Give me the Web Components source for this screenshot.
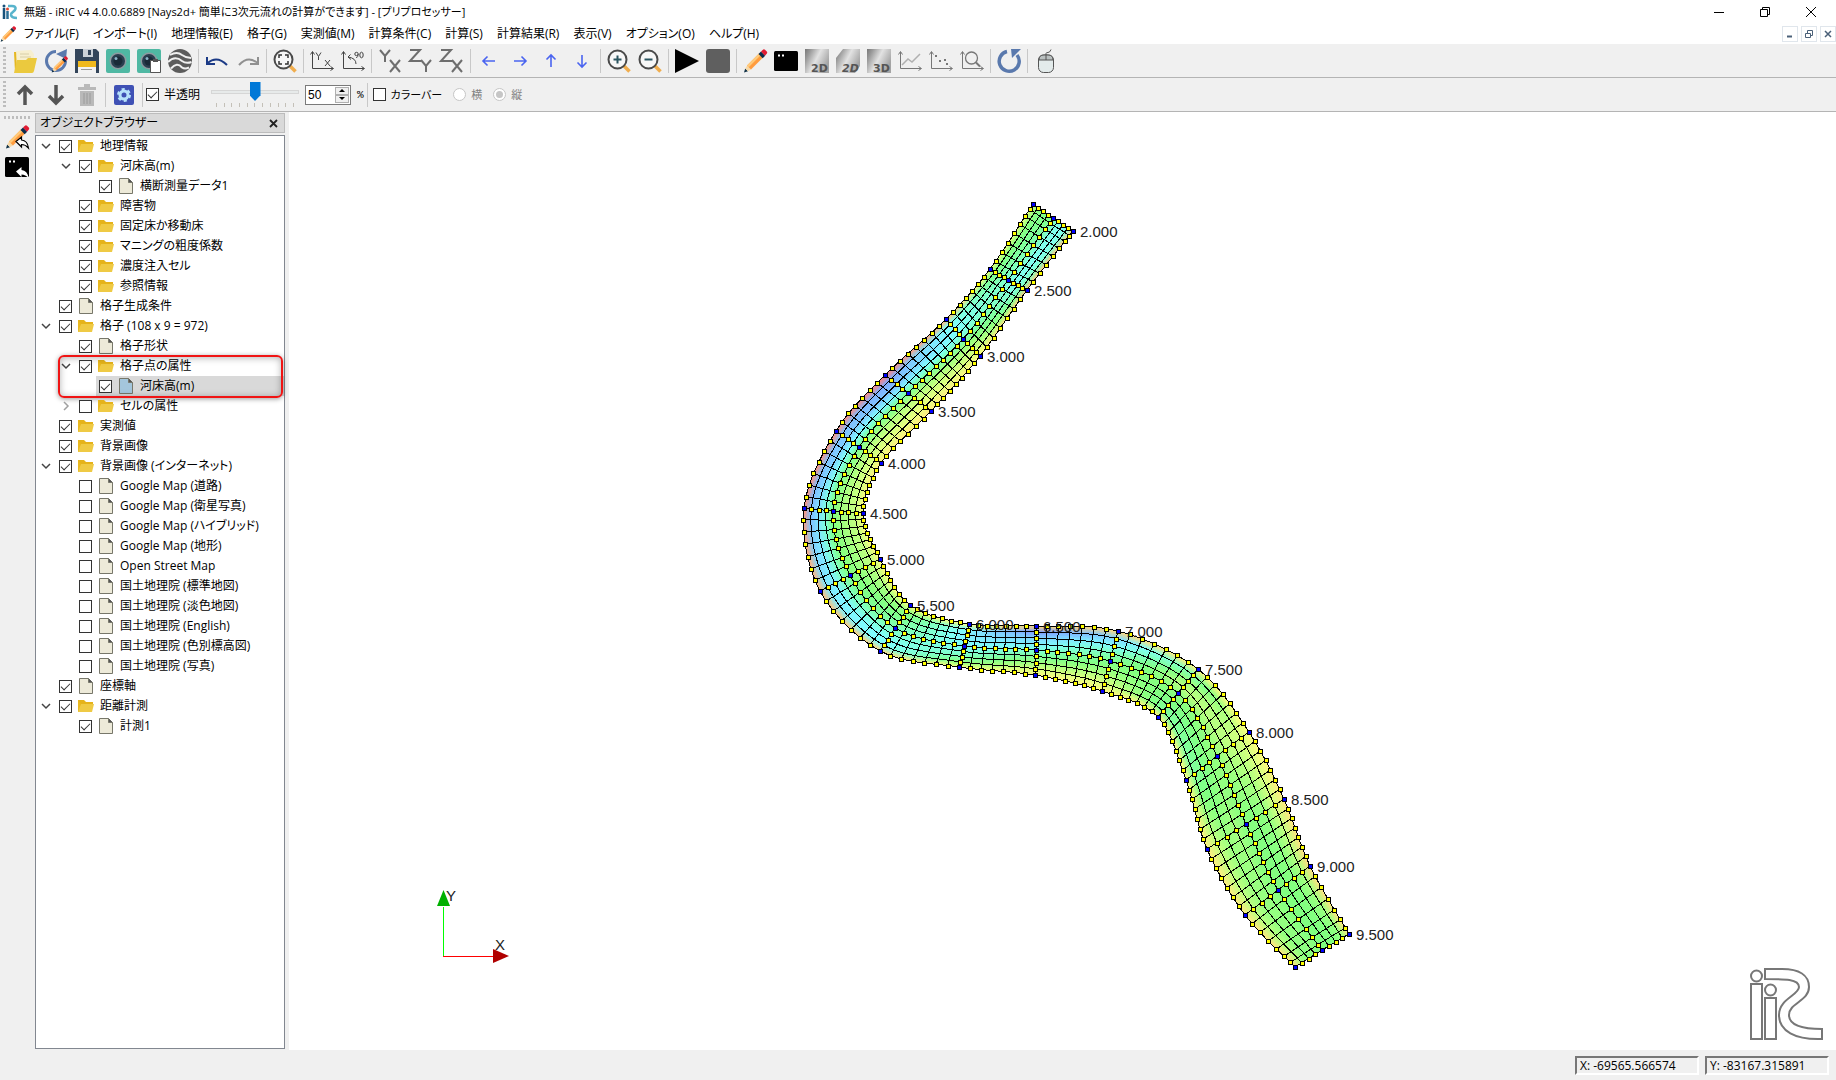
<!DOCTYPE html>
<html lang="ja">
<head>
<meta charset="utf-8">
<title>iRIC</title>
<style>
    html, body { height: 100%; margin: 0; }
    body {
        background: #f0f0f0;
        color: #000;
        font: 12px/20px "Open Sans", "Noto Sans CJK JP", sans-serif;
        font-feature-settings: "palt";
        overflow: hidden;
    }
</style>
</head>
<body>
<app-window>
    <title-bar slot="title" text="無題 - iRIC v4 4.0.0.6889 [Nays2d+ 簡単に3次元流れの計算ができます] - [プリプロセッサー]"></title-bar>
    <menu-bar slot="menu" items="ファイル(F),インポート(I),地理情報(E),格子(G),実測値(M),計算条件(C),計算(S),計算結果(R),表示(V),オプション(O),ヘルプ(H)"></menu-bar>

    <tool-bar slot="tools">
        <tool-button icon="open"></tool-button>
        <tool-button icon="reload"></tool-button>
        <tool-button icon="save"></tool-button>
        <tool-button icon="camera"></tool-button>
        <tool-button icon="cameraCopy"></tool-button>
        <tool-button icon="earth"></tool-button>
        <tool-separator></tool-separator>
        <tool-button icon="undo"></tool-button>
        <tool-button icon="redo"></tool-button>
        <tool-separator></tool-separator>
        <tool-button icon="fit"></tool-button>
        <tool-separator></tool-separator>
        <tool-button icon="axesXY"></tool-button>
        <tool-button icon="rotate90"></tool-button>
        <tool-separator></tool-separator>
        <tool-button icon="planeXY"></tool-button>
        <tool-button icon="planeYZ"></tool-button>
        <tool-button icon="planeXZ"></tool-button>
        <tool-separator></tool-separator>
        <tool-button icon="left"></tool-button>
        <tool-button icon="right"></tool-button>
        <tool-button icon="up"></tool-button>
        <tool-button icon="down"></tool-button>
        <tool-separator></tool-separator>
        <tool-button icon="zoomIn"></tool-button>
        <tool-button icon="zoomOut"></tool-button>
        <tool-separator></tool-separator>
        <tool-button icon="play"></tool-button>
        <tool-button icon="stop"></tool-button>
        <tool-separator></tool-separator>
        <tool-button icon="pencil"></tool-button>
        <tool-button icon="console"></tool-button>
        <tool-button icon="view2d"></tool-button>
        <tool-button icon="view2dBird"></tool-button>
        <tool-button icon="view3d"></tool-button>
        <tool-button icon="chart"></tool-button>
        <tool-button icon="scatter"></tool-button>
        <tool-button icon="chartZoom"></tool-button>
        <tool-separator></tool-separator>
        <tool-button icon="refresh"></tool-button>
        <tool-separator></tool-separator>
        <tool-button icon="mouse"></tool-button>
    </tool-bar>

    <tool-bar slot="tools">
        <tool-button icon="moveUp"></tool-button>
        <tool-button icon="moveDown"></tool-button>
        <tool-button icon="trash"></tool-button>
        <tool-separator></tool-separator>
        <tool-button icon="gear"></tool-button>
        <tool-separator></tool-separator>
        <opacity-control></opacity-control>
        <tool-separator></tool-separator>
        <colorbar-control></colorbar-control>
    </tool-bar>

    <side-strip slot="side">
        <tool-button icon="pencilBack"></tool-button>
        <tool-button icon="consoleBack"></tool-button>
    </side-strip>

    <dock-panel slot="dock" heading="オブジェクトブラウザー">
        <tree-item label="地理情報" icon="folder" checked expanded>
            <tree-item label="河床高(m)" icon="folder" checked expanded>
                <tree-item label="横断測量データ1" icon="file" checked></tree-item>
            </tree-item>
            <tree-item label="障害物" icon="folder" checked></tree-item>
            <tree-item label="固定床か移動床" icon="folder" checked></tree-item>
            <tree-item label="マニングの粗度係数" icon="folder" checked></tree-item>
            <tree-item label="濃度注入セル" icon="folder" checked></tree-item>
            <tree-item label="参照情報" icon="folder" checked></tree-item>
        </tree-item>
        <tree-item label="格子生成条件" icon="file" checked></tree-item>
        <tree-item label="格子 (108 x 9 = 972)" icon="folder" checked expanded>
            <tree-item label="格子形状" icon="file" checked></tree-item>
            <tree-item label="格子点の属性" icon="folder" checked expanded marked>
                <tree-item label="河床高(m)" icon="fileBlue" checked selected></tree-item>
            </tree-item>
            <tree-item label="セルの属性" icon="folder" collapsed></tree-item>
        </tree-item>
        <tree-item label="実測値" icon="folder" checked></tree-item>
        <tree-item label="背景画像" icon="folder" checked></tree-item>
        <tree-item label="背景画像 (インターネット)" icon="folder" checked expanded>
            <tree-item label="Google Map (道路)" icon="file"></tree-item>
            <tree-item label="Google Map (衛星写真)" icon="file"></tree-item>
            <tree-item label="Google Map (ハイブリッド)" icon="file"></tree-item>
            <tree-item label="Google Map (地形)" icon="file"></tree-item>
            <tree-item label="Open Street Map" icon="file"></tree-item>
            <tree-item label="国土地理院 (標準地図)" icon="file"></tree-item>
            <tree-item label="国土地理院 (淡色地図)" icon="file"></tree-item>
            <tree-item label="国土地理院 (English)" icon="file"></tree-item>
            <tree-item label="国土地理院 (色別標高図)" icon="file"></tree-item>
            <tree-item label="国土地理院 (写真)" icon="file"></tree-item>
        </tree-item>
        <tree-item label="座標軸" icon="file" checked></tree-item>
        <tree-item label="距離計測" icon="folder" checked expanded>
            <tree-item label="計測1" icon="file" checked></tree-item>
        </tree-item>
    </dock-panel>

    <grid-view slot="view"></grid-view>

    <status-bar slot="status">
        <status-field>X: -69565.566574</status-field>
        <status-field>Y: -83167.315891</status-field>
    </status-bar>
</app-window>

<script>
// ---- icons ----
const svg = (body, size = 24) => `<svg width="${size}" height="${size}" viewBox="0 0 ${size} ${size}" aria-hidden="true">${body}</svg>`;

const PENCIL = `
    <path d="M1 23.5l1.200-4 2.800 2.800z" fill="#123247"/>
    <path d="M2.200 19.500l2.300-3.500 4 4-3.500 2.300z" fill="#f7d9a8"/>
    <path d="M4 16.500L16 4.500l4 4L8 20.500z" fill="#ff9c3f"/>
    <path d="M4 16.500L16 4.500l1.700 1.700L5.700 18.200z" fill="#ffca7a"/>
    <path d="M15.500 5l2.500-2.500 4.200 4.200-2.500 2.500z" fill="#0d2c4a"/>
    <path d="M18 2.500L20.200.500q1-.6 1.800.2l2 2q.5.900-.1 1.700L22 6.700z" fill="#e01b32"/>`;
const CAMERA = `
    <rect width="24" height="24" rx="2" fill="#4fb8a3"/>
    <circle cx="12" cy="12" r="8.500" fill="#8d9aa0"/>
    <circle cx="12" cy="12" r="7" fill="#2a3e4f"/>
    <circle cx="12" cy="12" r="4.500" fill="#1a2a38"/>
    <circle cx="10" cy="9.500" r="1.500" fill="#8db4c8"/>`;
const LENS = `
    <path d="M17 17l5.500 5.500" stroke="#f0ad4e" stroke-width="3.500"/>
    <circle cx="10.500" cy="10.500" r="9" fill="#f7f7f7" stroke="#4a4a4a" stroke-width="2"/>`;
const AXES = `<path d="M2.500 3v16.500H23M.500 5.500l2-3 2 3M20.500 17.500l3 2-3 2" fill="none"/>`;
const CONSOLE = `<rect y="2" width="24" height="20" rx="1.500"/><path d="M4 6.500h2M8 6.500h2" stroke="#fff" stroke-width="2"/>`;
const BACK = `<path d="M11 16.500l5.500-4.500v3q6 .5 7 8-3-3.500-7-3.500v2.500z" `;
const letters = (a, b) => `<g fill="none" stroke="#6e6e6e" stroke-width="2">${a}${b}</g>`;
const metal = `<defs><linearGradient id="m" x2="1" y2=".5"><stop stop-color="#777"/><stop offset=".2" stop-color="#999"/><stop offset=".55" stop-color="#e2e2e2"/><stop offset="1" stop-color="#a4a4a4"/></linearGradient></defs>`;
const arrow = angle => `<path transform="rotate(${angle} 12 12)" d="M6 12h12M10.500 7.500L6 12l4.500 4.500" fill="none" stroke="#4a64f0" stroke-width="1.600"/>`;
const PAGE = fill => `<path d="M1.500.500h9l4 4v11h-13z" fill="${fill}" stroke="#77776a"/><path d="M10.500.500v4h4" fill="#555" stroke="#77776a"/>`;

const ICONS = {
    logo: svg(`<circle cx="2" cy="2" r="1.500" fill="#17517a"/><path d="M2 4v11" stroke="#17517a" stroke-width="2.500"/>
        <circle cx="5.500" cy="5" r="1.500" fill="#e04830"/><path d="M5.500 7v8" stroke="#2d6f96" stroke-width="2.500"/>
        <path d="M6 2h4q4 0 3.500 2.800-.3 1.700-2.500 3T9 11q.5 3 6 3" fill="none" stroke="#58b4cc" stroke-width="2.600"/>`, 16),
    pencilSmall: `<svg width="16" height="16" viewBox="0 0 24 24">${PENCIL}</svg>`,
    open: svg(`<path d="M1 3h7l2 2v18H2z" fill="#e5b721"/><path d="M3 2l15-1 3 4-1 15H4z" fill="#f7efcf"/><path d="M7 5h9M7 8h11" stroke="#d8cfa8"/>
        <path d="M4 11h9l2-2h9l-3 13q-.5 2-2 2H1z" fill="#ebc93e"/>`),
    reload: svg(`<path d="M12 2.500A9.500 9.500 0 1 0 21.500 12" fill="none" stroke="#5a79ad" stroke-width="3"/><path d="M12 5l11-5-1 10z" fill="#5a79ad"/>
        <g transform="translate(7 7) scale(.7)">${PENCIL}</g>`),
    save: svg(`<path d="M0 0h21l3 3v21H0z" fill="#33455a"/><path d="M8 0h10v8H8z" fill="#ccd2d8"/><path d="M13 1h3v5h-3z" fill="#33455a"/>
        <path d="M3 12h18v12H3z" fill="#f2f2f2"/><path d="M3 12h18v6H3z" fill="#f0b91d"/><path d="M6 20.500h11" stroke="#999"/>`),
    camera: svg(CAMERA),
    cameraCopy: svg(CAMERA + `<path d="M13.500 11.500h10v12h-10z" fill="#fff" stroke="#555"/><path d="M16 10h5v3h-5z" fill="#555"/>`),
    earth: svg(`<circle cx="12" cy="12" r="12" fill="#5c5c5c"/>
        <path d="M2 6q7-4 12 0 4 3 9 3M0 13q7-7 14-1 4 3 9.500 1M3 19.500q6-7 11-1 3 2 7 0" fill="none" stroke="#f0f0f0" stroke-width="2"/>`),
    undo: svg(`<path d="M2.500 14Q12 6 22 16" fill="none" stroke="#1b3a86" stroke-width="2"/><path d="M2 8v7h8" fill="none" stroke="#1b3a86" stroke-width="2"/>`),
    redo: svg(`<path d="M21.500 14Q12 6 3 16" fill="none" stroke="#909090" stroke-width="2"/><path d="M22 8v7h-8" fill="none" stroke="#909090" stroke-width="2"/>`),
    fit: svg(LENS + `<path d="M6 9V6h3M12 6h3v3M15 12v3h-3M9 15H6v-3" fill="none" stroke="#333" stroke-width="1.500"/>`),
    axesXY: svg(`<g stroke="#444">${AXES}<path d="M6 3.500l2.500 4 2.500-4M8.500 7.500V11M15 11l5 6M20 11l-5 6" fill="none"/></g>`),
    rotate90: svg(`<g stroke="#444">${AXES}<path d="M15 15q0-6-8-7M9.500 5.500L7 8l3 2.500" fill="none"/>
        <circle cx="15.500" cy="5" r="1.700" fill="none"/><path d="M17.200 5q0 3-2 4" fill="none"/><ellipse cx="20.500" cy="6" rx="1.700" ry="2.800" fill="none"/></g>`),
    planeXY: svg(letters(`<path d="M2 1l5 6 5-6M7 7v6"/>`, `<path d="M12 11l10 12M22 11L12 23"/>`)),
    planeYZ: svg(letters(`<path d="M1 1h10L1 12h11"/>`, `<path d="M12 11l5 6 5-6M17 17v6"/>`)),
    planeXZ: svg(letters(`<path d="M1 1h10L1 12h11"/>`, `<path d="M12 11l10 12M22 11L12 23"/>`)),
    left: svg(arrow(0)),
    right: svg(arrow(180)),
    up: svg(arrow(90)),
    down: svg(arrow(270)),
    zoomIn: svg(LENS + `<path d="M6.500 10.500h8M10.500 6.500v8" stroke="#2b5560" stroke-width="2"/>`),
    zoomOut: svg(LENS + `<path d="M6.500 10.500h8" stroke="#2b5560" stroke-width="2"/>`),
    play: svg(`<path d="M0 0l24 12L0 24z"/>`),
    stop: svg(`<rect width="24" height="24" rx="3" fill="#5f5f5f"/>`),
    pencil: svg(PENCIL),
    console: svg(CONSOLE),
    view2d: svg(`${metal}<path d="M0 0h24v24H0z" fill="url(#m)"/><text x="6" y="23" font-family="DejaVu Sans" font-weight="bold" font-size="11" fill="#555">2D</text>`),
    view2dBird: svg(`${metal}<path d="M7 0h17v17l-5 7H0V9z" fill="url(#m)"/><text x="6" y="23" font-family="DejaVu Sans" font-weight="bold" font-style="italic" font-size="11" fill="#555">2D</text>`),
    view3d: svg(`${metal}<path d="M0 0h24v24H0z" fill="url(#m)"/><text x="6" y="23" font-family="DejaVu Sans" font-weight="bold" font-size="11" fill="#555">3D</text>`),
    chart: svg(`<g stroke="#777">${AXES}<path d="M4 16l6-6 4 3 8-8" fill="none" stroke="#b0b0b0" stroke-width="1.500"/></g>`),
    scatter: svg(`<g stroke="#777">${AXES}</g><path d="M6 7h2M10 12h2M15 11h2M17 15h2" stroke="#777" stroke-width="2"/>`),
    chartZoom: svg(`<g stroke="#777">${AXES}<circle cx="11.500" cy="9" r="6" fill="none" stroke-width="1.300"/><path d="M16 13.500l4 4" stroke-width="2"/></g>`),
    refresh: svg(`<path d="M10 2.500A10 10 0 1 0 20 6" fill="none" stroke="#5a79ad" stroke-width="3.500"/><path d="M14 0h10l-9 9z" fill="#5a79ad"/>`),
    mouse: svg(`<rect x="4.500" y="6" width="15" height="17.500" rx="5" fill="#e3ebeb" stroke="#555"/><path d="M5 11q0-5 5-5h4q5 0 5 5z" fill="#b9bfbf" stroke="#555"/>
        <path d="M12 11V4.500q0-1 2-1 2 0 3-3" fill="none" stroke="#555"/>`),
    moveUp: svg(`<path d="M12 22V4M5 11l7-7 7 7" fill="none" stroke="#555" stroke-width="3.500"/>`),
    moveDown: svg(`<path d="M12 2v18M5 13l7 7 7-7" fill="none" stroke="#555" stroke-width="3.500"/>`),
    trash: svg(`<path d="M3 4h18v3H3zM9 1h6v3H9zM5 8h14v15H5z" fill="#b9b9b9"/><path d="M9 10v11M12 10v11M15 10v11" stroke="#9a9a9a"/>`),
    gear: svg(`<rect x="2" y="2" width="20" height="20" rx="2" fill="#3f51b5"/><circle cx="12" cy="12" r="4" fill="none" stroke="#b5e1fb" stroke-width="3"/>
        <circle cx="12" cy="12" r="6" fill="none" stroke="#b5e1fb" stroke-width="2" stroke-dasharray="3.140 3.140"/>`),
    pencilBack: svg(PENCIL + BACK + `fill="#fff" stroke="#000" stroke-width="1.200"/>`),
    consoleBack: svg(CONSOLE + BACK + `fill="#fff"/>`),
    folder: svg(`<path d="M0 2h6l2 2h7v4H0z" fill="#e5b31b"/><path d="M3 6h13l-2 8H0V9z" fill="#efca45"/><path d="M0 2v12l3-8z" fill="#e9b91f"/>`, 16),
    file: svg(PAGE('#edead9'), 16),
    fileBlue: svg(PAGE('#a4c6dc'), 16)
};

// shared look of tick boxes and radio buttons
const CHECK_STYLE = `
    input[type=checkbox], input[type=radio] {
        appearance: none;
        flex: none;
        display: grid;
        place-items: center;
        width: 13px;
        height: 13px;
        margin: 0;
        border: 1px solid #333;
        background: #fff;
    }
    input[type=checkbox]:checked::before {
        content: "";
        width: 8px;
        height: 4px;
        border: solid #333;
        border-width: 0 0 1px 1px;
        transform: translateY(-1px) rotate(-45deg);
    }
    input[type=radio] { border-color: #c6c6c6; border-radius: 50%; }
    input[type=radio]:checked::before {
        content: "";
        width: 7px;
        height: 7px;
        border-radius: 50%;
        background: #c6c6c6;
    }
`;

class BaseElement extends HTMLElement {
    constructor() {
        super();
        this.attachShadow({ mode: 'open' });
    }

    connectedCallback() {
        const template = document.createElement('template');
        template.innerHTML = this.render();
        this.shadowRoot.replaceChildren(template.content.cloneNode(true));
    }
}

class AppWindow extends BaseElement {
    render() {
        return `
            <style>
                :host { display: flex; flex-direction: column; height: 100vh; }
                main { flex: 1; display: flex; min-height: 0; }
                ::slotted([slot=view]) { flex: 1; }
            </style>
            <slot name="title"></slot>
            <slot name="menu"></slot>
            <slot name="tools"></slot>
            <main>
                <slot name="side"></slot>
                <slot name="dock"></slot>
                <slot name="view"></slot>
            </main>
            <slot name="status"></slot>
        `;
    }
}
customElements.define('app-window', AppWindow);

class TitleBar extends BaseElement {
    render() {
        return `
            <style>
                :host { display: flex; align-items: center; height: 23px; padding: 0 2px; background: #fff; }
                svg { display: block; }
                h1 { flex: 1; margin: 0 0 0 6px; font-size: 11px; font-weight: normal; white-space: nowrap; }
                button { display: grid; place-items: center; width: 46px; height: 23px; padding: 0; border: 0; background: none; }
                button svg { fill: none; stroke: #000; }
            </style>
            ${ICONS.logo}
            <h1>${this.getAttribute('text')}</h1>
            <button aria-label="最小化">${svg('<path d="M0 5.500h10"/>', 10)}</button>
            <button aria-label="元に戻す">${svg('<path d="M.500 2.500h7v7h-7zM2.500 2.500v-2h7v7h-2"/>', 10)}</button>
            <button aria-label="閉じる">${svg('<path d="M0 0l10 10M10 0L0 10"/>', 10)}</button>
        `;
    }
}
customElements.define('title-bar', TitleBar);

class MenuBar extends BaseElement {
    render() {
        const items = this.getAttribute('items').split(',');
        return `
            <style>
                :host { display: flex; align-items: center; height: 21px; background: #fff; }
                nav { flex: 1; display: flex; padding-left: 1px; }
                button { padding: 0 7px; border: 0; background: none; font: inherit; font-feature-settings: inherit; color: inherit; white-space: nowrap; }
                .mdi { display: flex; gap: 3px; }
                .mdi button { display: grid; place-items: center; width: 16px; height: 16px; padding: 0; border: 1px solid #e0e6ec; }
                .mdi svg { fill: none; stroke: #4a6078; }
            </style>
            ${ICONS.pencilSmall}
            <nav>${items.map(item => `<button>${item}</button>`).join('')}</nav>
            <div class="mdi">
                <button aria-label="最小化">${svg('<path d="M1 6.500h5" stroke-width="2"/>', 8)}</button>
                <button aria-label="元に戻す">${svg('<path d="M.500 3.500h5v4h-5zM2.500 3V.500h5v5H6"/>', 8)}</button>
                <button aria-label="閉じる">${svg('<path d="M1 1l6 6M7 1L1 7" stroke-width="1.500"/>', 8)}</button>
            </div>
        `;
    }
}
customElements.define('menu-bar', MenuBar);

class ToolBar extends BaseElement {
    render() {
        return `
            <style>
                :host {
                    display: flex;
                    align-items: center;
                    height: 33px;
                    background: #f0f0f0;
                    border-bottom: 1px solid #b4b4b4;
                }
                .handle { width: 3px; height: 27px; margin: 0 3px; background: repeating-linear-gradient(#bdbdbd 0 2px, transparent 2px 4px); }
            </style>
            <span class="handle"></span>
            <slot></slot>
        `;
    }
}
customElements.define('tool-bar', ToolBar);

class ToolButton extends BaseElement {
    render() {
        const icon = this.getAttribute('icon');
        return `
            <style>
                :host { display: block; flex: none; }
                button { display: block; width: 31px; padding: 0 3px 0 4px; border: 0; background: none; }
                svg { display: block; overflow: visible; }
            </style>
            <button aria-label="${icon}">${ICONS[icon]}</button>
        `;
    }
}
customElements.define('tool-button', ToolButton);

class ToolSeparator extends BaseElement {
    render() {
        return `
            <style>
                :host { display: block; flex: none; width: 1px; height: 24px; margin: 0 2px 0 3px; background: #c8c8c8; }
            </style>
        `;
    }
}
customElements.define('tool-separator', ToolSeparator);

class OpacityControl extends BaseElement {
    render() {
        return `
            <style>
                :host { display: flex; align-items: center; }
                ${CHECK_STYLE}
                label { display: flex; align-items: center; gap: 5px; margin-left: 1px; }
                .slider { width: 88px; margin: 0 6px 0 11px; }
                input[type=range] { appearance: none; display: block; width: 100%; height: 19px; margin: 0; background: none; }
                input[type=range]::-webkit-slider-runnable-track {
                    height: 4px;
                    border: 1px solid #d6d6d6;
                    box-sizing: border-box;
                    background: #e7eaea;
                }
                input[type=range]::-webkit-slider-thumb {
                    appearance: none;
                    width: 11px;
                    height: 19px;
                    margin-top: -9px;
                    background: #0078d7;
                    clip-path: polygon(0 0, 100% 0, 100% 70%, 50% 100%, 0 70%);
                }
                .ticks { display: flex; justify-content: space-between; margin: 1px 5px 0; }
                .ticks i { width: 1px; height: 4px; background: #c4c0b8; }
                .spin { display: flex; width: 44px; height: 18px; border: 1px solid #7a7a7a; background: #fff; }
                .spin input { flex: 1; min-width: 0; padding: 0 2px; border: 0; background: none; font: 12px/18px "Liberation Sans", Arial, sans-serif; }
                .spin div { display: grid; grid-template-rows: 1fr 1fr; width: 14px; margin: 1px; }
                .spin button { display: grid; place-items: center; padding: 0; border: 1px solid #b0b0b0; background: #f0f0f0; }
                .unit { margin: 0 0 0 6px; font: 11px/20px "Liberation Mono", monospace; }
            </style>
            <label><input type="checkbox" checked>半透明</label>
            <div class="slider">
                <input type="range" min="0" max="100" value="50" aria-label="不透明度">
                <div class="ticks">${'<i></i>'.repeat(11)}</div>
            </div>
            <div class="spin">
                <input type="text" value="50" aria-label="不透明度 (%)">
                <div>
                    <button aria-label="増やす">${svg('<path d="M0 4l3-3 3 3z"/>', 6)}</button>
                    <button aria-label="減らす">${svg('<path d="M0 1l3 3 3-3z"/>', 6)}</button>
                </div>
            </div>
            <span class="unit">%</span>
        `;
    }
}
customElements.define('opacity-control', OpacityControl);

class ColorbarControl extends BaseElement {
    render() {
        return `
            <style>
                :host { display: flex; align-items: center; gap: 11px; margin-left: 3px; font-size: 11px; }
                ${CHECK_STYLE}
                label { display: flex; align-items: center; gap: 5px; }
                .off { color: #808080; }
            </style>
            <label><input type="checkbox">カラーバー</label>
            <label class="off"><input type="radio" name="dir" disabled>横</label>
            <label class="off"><input type="radio" name="dir" checked disabled>縦</label>
        `;
    }
}
customElements.define('colorbar-control', ColorbarControl);

class SideStrip extends BaseElement {
    render() {
        return `
            <style>
                :host { display: flex; flex-direction: column; gap: 6px; box-sizing: border-box; width: 34px; padding-left: 1px; background: #f0f0f0; }
                .handle { width: 27px; height: 3px; margin: 4px 3px 0; background: repeating-linear-gradient(90deg, #bdbdbd 0 2px, transparent 2px 4px); }
            </style>
            <span class="handle"></span>
            <slot></slot>
        `;
    }
}
customElements.define('side-strip', SideStrip);

class DockPanel extends BaseElement {
    render() {
        return `
            <style>
                :host { display: flex; flex-direction: column; gap: 2px; width: 250px; padding: 1px 4px 1px 1px; background: #f0f0f0; }
                header {
                    display: flex;
                    align-items: center;
                    justify-content: space-between;
                    height: 18px;
                    padding: 0 6px 0 4px;
                    border: 1px solid #bcbcbc;
                    background: #d9d9d9;
                }
                h2 { margin: 0; font-size: 12px; line-height: 18px; font-weight: normal; }
                button { display: grid; place-items: center; padding: 0; border: 0; background: none; }
                .tree { flex: 1; border: 1px solid #828790; background: #fff; }
            </style>
            <header>
                <h2>${this.getAttribute('heading')}</h2>
                <button aria-label="閉じる">${svg('<path d="M1 1l7 7M8 1L1 8" stroke="#222" stroke-width="1.800"/>', 9)}</button>
            </header>
            <div class="tree"><slot></slot></div>
        `;
    }
}
customElements.define('dock-panel', DockPanel);

class TreeItem extends BaseElement {
    render() {
        let chevron = '';
        if (this.hasAttribute('expanded')) {
            chevron = svg('<path d="M1 3l4 4 4-4" fill="none" stroke="#444" stroke-width="1.500"/>', 10);
        } else if (this.hasAttribute('collapsed')) {
            chevron = svg('<path d="M3 1l4 4-4 4" fill="none" stroke="#a0a0a0" stroke-width="1.500"/>', 10);
        }
        return `
            <style>
                :host { display: block; position: relative; }
                ${CHECK_STYLE}
                .row { display: flex; height: 20px; }
                .toggle { display: grid; place-items: center; flex: none; width: 20px; padding: 0; border: 0; background: none; }
                label { flex: 1; display: flex; align-items: center; gap: 6px; padding-left: 3px; white-space: nowrap; }
                svg { display: block; flex: none; }
                .children { padding-left: 20px; }
                :host([selected]) label { background: #d9d9d9; }
                /* red frame around the item and its children */
                :host([marked])::after {
                    content: "";
                    position: absolute;
                    inset: -1px 1px -2px 2px;
                    border: 2px solid #f01414;
                    border-radius: 6px;
                    box-shadow: 0 1px 5px rgba(0, 0, 0, .4), inset 0 1px 7px rgba(0, 0, 0, .3);
                    pointer-events: none;
                }
            </style>
            <div class="row">
                ${chevron ? `<button class="toggle" aria-label="展開">${chevron}</button>` : '<span class="toggle"></span>'}
                <label><input type="checkbox" ${this.hasAttribute('checked') ? 'checked' : ''}>${ICONS[this.getAttribute('icon')]}<span>${this.getAttribute('label')}</span></label>
            </div>
            <div class="children"><slot></slot></div>
        `;
    }
}
customElements.define('tree-item', TreeItem);

// ---- river grid ----
// each section: label, left bank, center, right bank, hue at the 9 nodes from left to right
const SECTIONS = [
    ['2.000', [1033, 204], [1053, 218], [1073, 231], [75, 112, 122, 118, 130, 165, 176, 172, 35]],
    ['2.500', [990, 269], [1008, 280], [1027, 290], [70, 120, 135, 150, 160, 172, 172, 145, 35]],
    ['3.000', [946, 319], [963, 339], [980, 356], [30, 175, 182, 175, 150, 110, 92, 78, 58]],
    ['3.500', [885, 375], [908, 393], [931, 411], [0, 220, 210, 185, 130, 95, 80, 68, 50]],
    ['4.000', [836, 431], [859, 447], [881, 463], [8, 208, 203, 180, 130, 102, 85, 74, 52]],
    ['4.500', [804, 508], [833, 511], [863, 513], [10, 212, 195, 165, 120, 105, 95, 88, 60]],
    ['5.000', [820, 591], [850, 575], [880, 559], [30, 192, 185, 150, 118, 112, 100, 90, 58]],
    ['5.500', [880, 651], [895, 628], [910, 605], [40, 178, 180, 165, 148, 135, 125, 110, 62]],
    ['6.000', [959, 667], [964, 646], [969, 624], [65, 115, 145, 165, 178, 184, 190, 185, 60]],
    ['6.500', [1035, 675], [1036, 650], [1036, 626], [58, 80, 105, 132, 165, 188, 202, 228, 40]],
    ['7.000', [1102, 691], [1110, 661], [1118, 631], [58, 76, 95, 112, 125, 148, 180, 200, 40]],
    ['7.500', [1158, 717], [1178, 693], [1198, 669], [55, 135, 128, 120, 112, 90, 105, 140, 55]],
    ['8.000', [1186, 780], [1217, 756], [1249, 732], [60, 135, 128, 115, 108, 95, 86, 78, 62]],
    ['8.500', [1207, 849], [1246, 824], [1284, 799], [52, 88, 108, 102, 118, 116, 110, 80, 50]],
    ['9.000', [1245, 915], [1278, 890], [1310, 866], [50, 92, 108, 110, 118, 120, 116, 100, 44]],
    ['9.500', [1295, 967], [1322, 950], [1349, 934], [46, 100, 118, 112, 120, 120, 118, 112, 50]]
];
const DIVISIONS = [8, 7, 8, 7, 7, 7, 7, 7, 7, 7, 7, 7, 7, 7, 7];

const lerp = (a, b, t) => a + (b - a) * t;

function spline(k, s, t) {
    const p = n => SECTIONS[Math.max(0, Math.min(SECTIONS.length - 1, n))][k];
    const [a, b, c, d] = [p(s - 1), p(s), p(s + 1), p(s + 2)];
    return [0, 1].map(i => b[i] + 0.5 * t * (c[i] - a[i] + t * (2 * a[i] - 5 * b[i] + 4 * c[i] - d[i] + t * (3 * (b[i] - c[i]) + d[i] - a[i]))));
}

// half transparent rainbow colour on white
function hueColor(h) {
    const f = n => {
        const k = (n + h / 60) % 6;
        return 255 - 255 * Math.max(0, Math.min(k, 4 - k, 1)) * 0.5;
    };
    return [f(5), f(3), f(1)];
}

function buildColumns() {
    const columns = [];
    DIVISIONS.forEach((count, s) => {
        const last = s === DIVISIONS.length - 1;
        for (let n = 0; n < count + (last ? 1 : 0); n++) {
            const t = n / count;
            const [l, c, r] = [1, 2, 3].map(k => spline(k, s, t));
            const nodes = [];
            for (let j = 0; j <= 8; j++) {
                const [from, to, u] = j < 4 ? [l, c, j / 4] : [c, r, (j - 4) / 4];
                nodes.push({
                    x: lerp(from[0], to[0], u),
                    y: lerp(from[1], to[1], u),
                    rgb: hueColor(lerp(SECTIONS[s][4][j], SECTIONS[s + 1][4][j], t))
                });
            }
            columns.push({ nodes, section: n === 0 || n === count });
        }
    });
    return columns;
}

class GridView extends BaseElement {
    drawMesh() {
        const columns = buildColumns();
        const steps = 4;
        let cells = '';
        let lines = '';
        let marks = '';
        const at = (a, b, c, d, u, v) => ({
            x: lerp(lerp(a.x, b.x, u), lerp(d.x, c.x, u), v),
            y: lerp(lerp(a.y, b.y, u), lerp(d.y, c.y, u), v)
        });
        const pt = p => `${p.x.toFixed(1)},${p.y.toFixed(1)}`;
        for (let i = 0; i < columns.length - 1; i++) {
            for (let j = 0; j < 8; j++) {
                const [a, b] = [columns[i].nodes[j], columns[i].nodes[j + 1]];
                const [d, c] = [columns[i + 1].nodes[j], columns[i + 1].nodes[j + 1]];
                for (let k = 0; k < steps; k++) {
                    const [u0, u1, um] = [k / steps, (k + 1) / steps, (k + 0.5) / steps];
                    const rgb = [0, 1, 2].map(n => Math.round(lerp(lerp(a.rgb[n], b.rgb[n], um), lerp(d.rgb[n], c.rgb[n], um), 0.5)));
                    cells += `<path d="M${[at(a, b, c, d, u0, 0), at(a, b, c, d, u1, 0), at(a, b, c, d, u1, 1), at(a, b, c, d, u0, 1)].map(pt).join('L')}z" fill="rgb(${rgb})"/>`;
                }
            }
        }
        columns.forEach(col => { lines += 'M' + col.nodes.map(pt).join('L'); });
        for (let j = 0; j <= 8; j++) lines += 'M' + columns.map(col => pt(col.nodes[j])).join('L');
        columns.forEach(col => col.nodes.forEach((p, j) => {
            if (!col.section && j % 4) return;
            const fill = col.section && j % 4 === 0 ? '#00f' : '#ff0';
            marks += `<rect x="${Math.round(p.x) - 1.5}" y="${Math.round(p.y) - 1.5}" width="4" height="4" fill="${fill}"/>`;
        }));
        const labels = SECTIONS.map(([name, , , r]) => `<text x="${r[0] + 7}" y="${r[1] + 6}">${name}</text>`).join('');
        return `
            <g shape-rendering="crispEdges">
                <g>${cells}</g>
                <path d="${lines}" fill="none" stroke="#000"/>
                <g stroke="#000">${marks}</g>
            </g>
            ${labels}
        `;
    }

    render() {
        return `
            <style>
                :host { display: block; position: relative; background: #fff; overflow: hidden; }
                .scene { position: absolute; inset: 0; width: 100%; height: 100%; }
                .scene text { font: 15px "Liberation Sans", Arial, sans-serif; fill: #222; }
                .logo { position: absolute; right: 13px; bottom: 9px; }
            </style>
            <svg class="scene">
                <g transform="translate(-289 -112)">
                    ${this.drawMesh()}
                    <path d="M443.500 956V907" stroke="#0f0"/>
                    <path d="M443 956.500h50" stroke="#f00"/>
                    <path d="M437 906h13l-6.500-16z" fill="#00b000"/>
                    <path d="M493 949v14l16-7z" fill="#b00000"/>
                    <text x="446" y="901">Y</text>
                    <text x="495" y="950">X</text>
                </g>
            </svg>
            <svg class="logo" width="74" height="74" viewBox="0 0 74 74" fill="#fff" stroke="#777" stroke-width="2">
                <circle cx="7.500" cy="9" r="5.500"/>
                <path d="M2 17h11v55H2z"/>
                <circle cx="21.500" cy="23" r="5.500"/>
                <path d="M16 31h11v41H16z"/>
                <path d="M16 2h17C50 2 60 8 60 20 60 34 40 36 40 48 40 58 54 62 73 62V72C46 73 30 64 30 48 30 32 50 28 50 20 50 12 36 12 16 12z"/>
            </svg>
        `;
    }
}
customElements.define('grid-view', GridView);

class StatusBar extends BaseElement {
    render() {
        return `
            <style>
                :host { display: flex; justify-content: flex-end; align-items: center; gap: 6px; height: 30px; padding-right: 7px; background: #f0f0f0; }
            </style>
            <slot></slot>
        `;
    }
}
customElements.define('status-bar', StatusBar);

class StatusField extends BaseElement {
    render() {
        return `
            <style>
                :host {
                    display: block;
                    box-sizing: border-box;
                    width: 124px;
                    height: 19px;
                    padding-left: 3px;
                    border: 2px solid;
                    border-color: #777 #fff #fff #777;
                    line-height: 16px;
                }
            </style>
            <slot></slot>
        `;
    }
}
customElements.define('status-field', StatusField);
</script>
</body>
</html>
